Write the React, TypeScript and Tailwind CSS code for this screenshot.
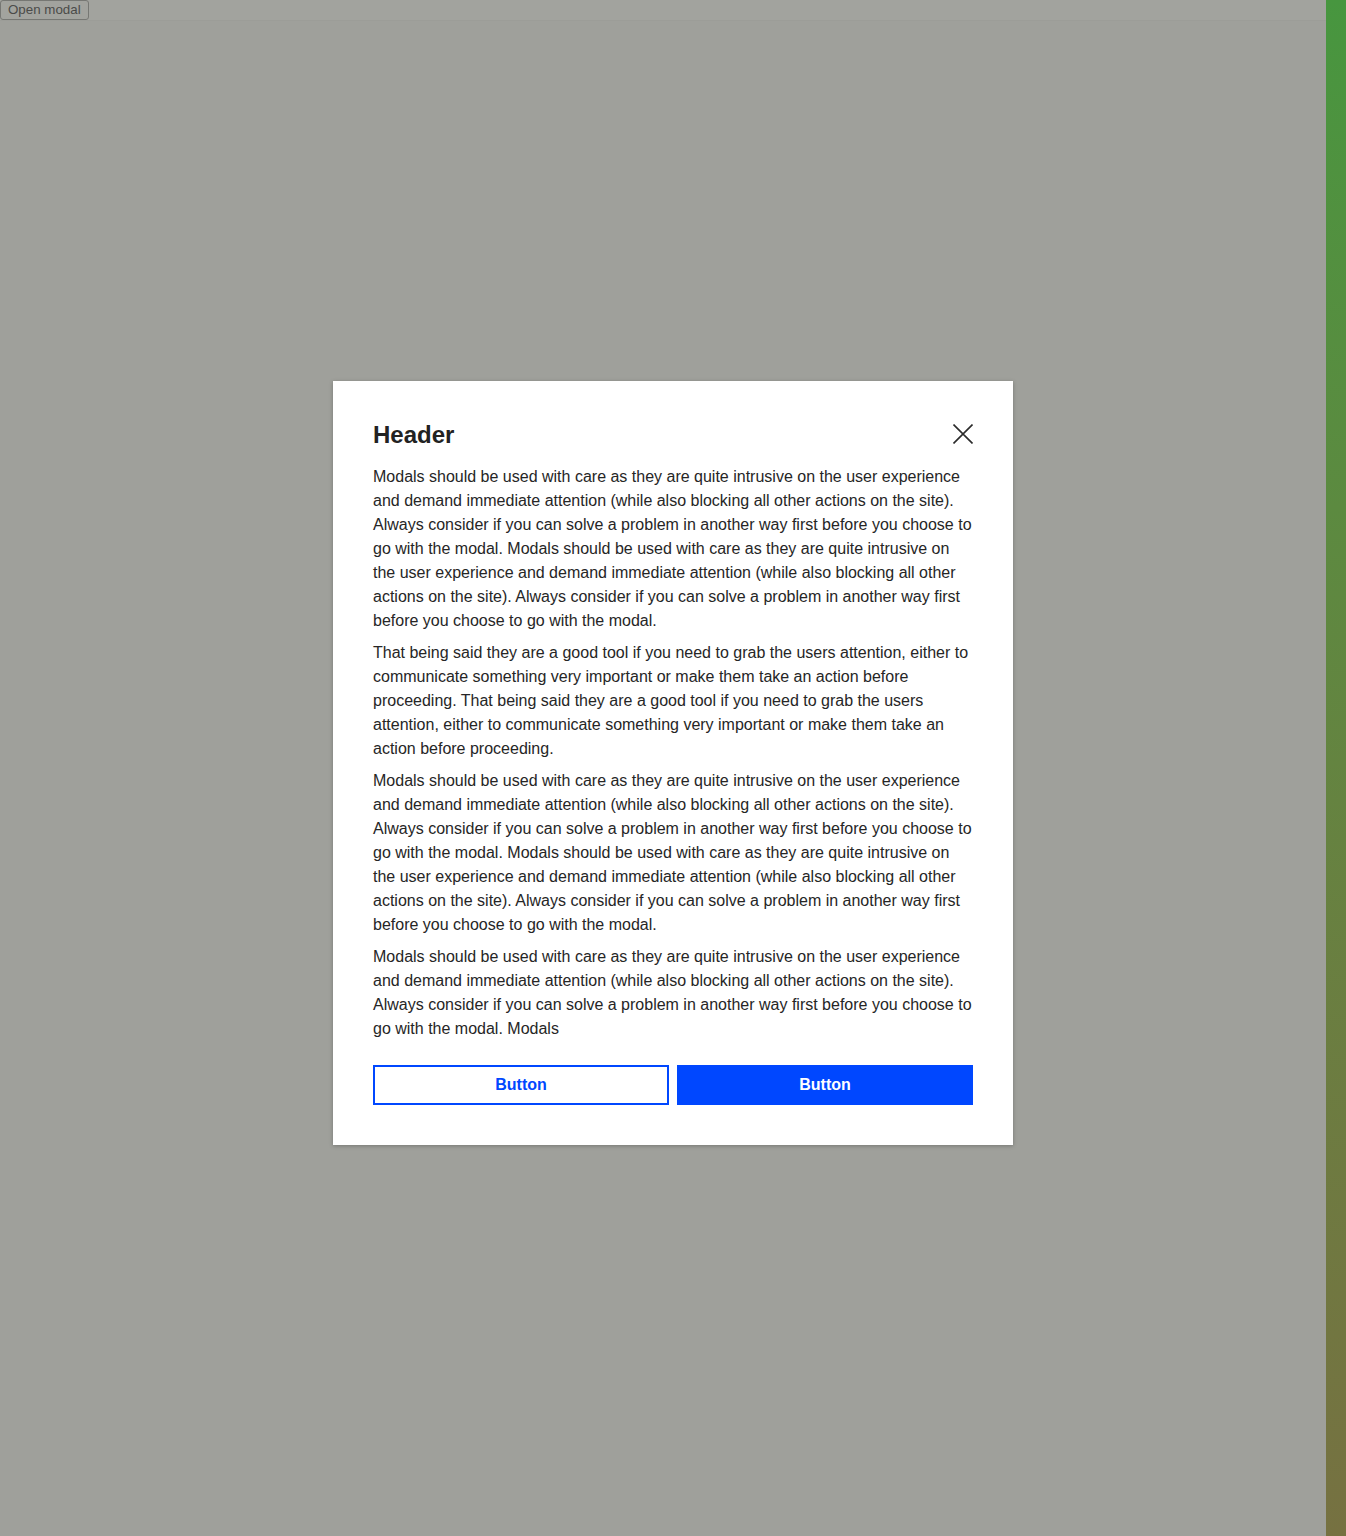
import React from 'react';

const p1 =
  'Modals should be used with care as they are quite intrusive on the user experience and demand immediate attention (while also blocking all other actions on the site). Always consider if you can solve a problem in another way first before you choose to go with the modal. Modals should be used with care as they are quite intrusive on the user experience and demand immediate attention (while also blocking all other actions on the site). Always consider if you can solve a problem in another way first before you choose to go with the modal.';
const p2 =
  'That being said they are a good tool if you need to grab the users attention, either to communicate something very important or make them take an action before proceeding. That being said they are a good tool if you need to grab the users attention, either to communicate something very important or make them take an action before proceeding.';
const p4 =
  'Modals should be used with care as they are quite intrusive on the user experience and demand immediate attention (while also blocking all other actions on the site). Always consider if you can solve a problem in another way first before you choose to go with the modal. Modals';

const App: React.FC = () => {
  return (
    <div className="relative w-[1346px] h-[1536px] flex bg-[#9fa09b] font-['Liberation_Sans',Arial,sans-serif] overflow-hidden">
      {/* Page under the backdrop */}
      <div className="flex-1 flex flex-col">
        <div className="h-[21px] flex items-start bg-[#a2a39e] border-b border-[#9c9d98]">
          <button className="h-[20px] px-[7px] text-[13.33px] leading-[18px] text-[#4b4b49] bg-[#a2a39e] border border-[#767773] rounded-[3px]">
            Open modal
          </button>
        </div>
      </div>
      <div className="w-[20px] h-full bg-gradient-to-b from-[#47963f] to-[#767141]" />

      {/* Modal */}
      <div className="absolute inset-0 flex justify-center pt-[381px]">
        <div className="w-[680px] h-fit bg-white p-10 shadow-[0_1px_4px_rgba(0,0,0,0.25)]">
          <div className="flex items-start justify-between">
            <h2 className="text-[24px] leading-[28px] font-bold text-[#222]">Header</h2>
            <button className="mt-[3px] w-5 h-5 text-[#2b2b2b]" aria-label="Close">
              <svg viewBox="0 0 20 20" width="20" height="20" fill="none" stroke="currentColor" strokeWidth="1.6">
                <path d="M0.5 0.5L19.5 19.5M19.5 0.5L0.5 19.5" />
              </svg>
            </button>
          </div>
          <div className="mt-4 space-y-2 text-[16px] leading-6 text-[#262626]">
            <p>{p1}</p>
            <p>{p2}</p>
            <p>{p1}</p>
            <p>{p4}</p>
          </div>
          <div className="mt-6 grid grid-cols-2 gap-2">
            <button className="h-10 border-2 border-[#0047ff] text-[#0047ff] font-bold text-[16px]">Button</button>
            <button className="h-10 bg-[#0047ff] text-white font-bold text-[16px]">Button</button>
          </div>
        </div>
      </div>
    </div>
  );
};

export default App;
